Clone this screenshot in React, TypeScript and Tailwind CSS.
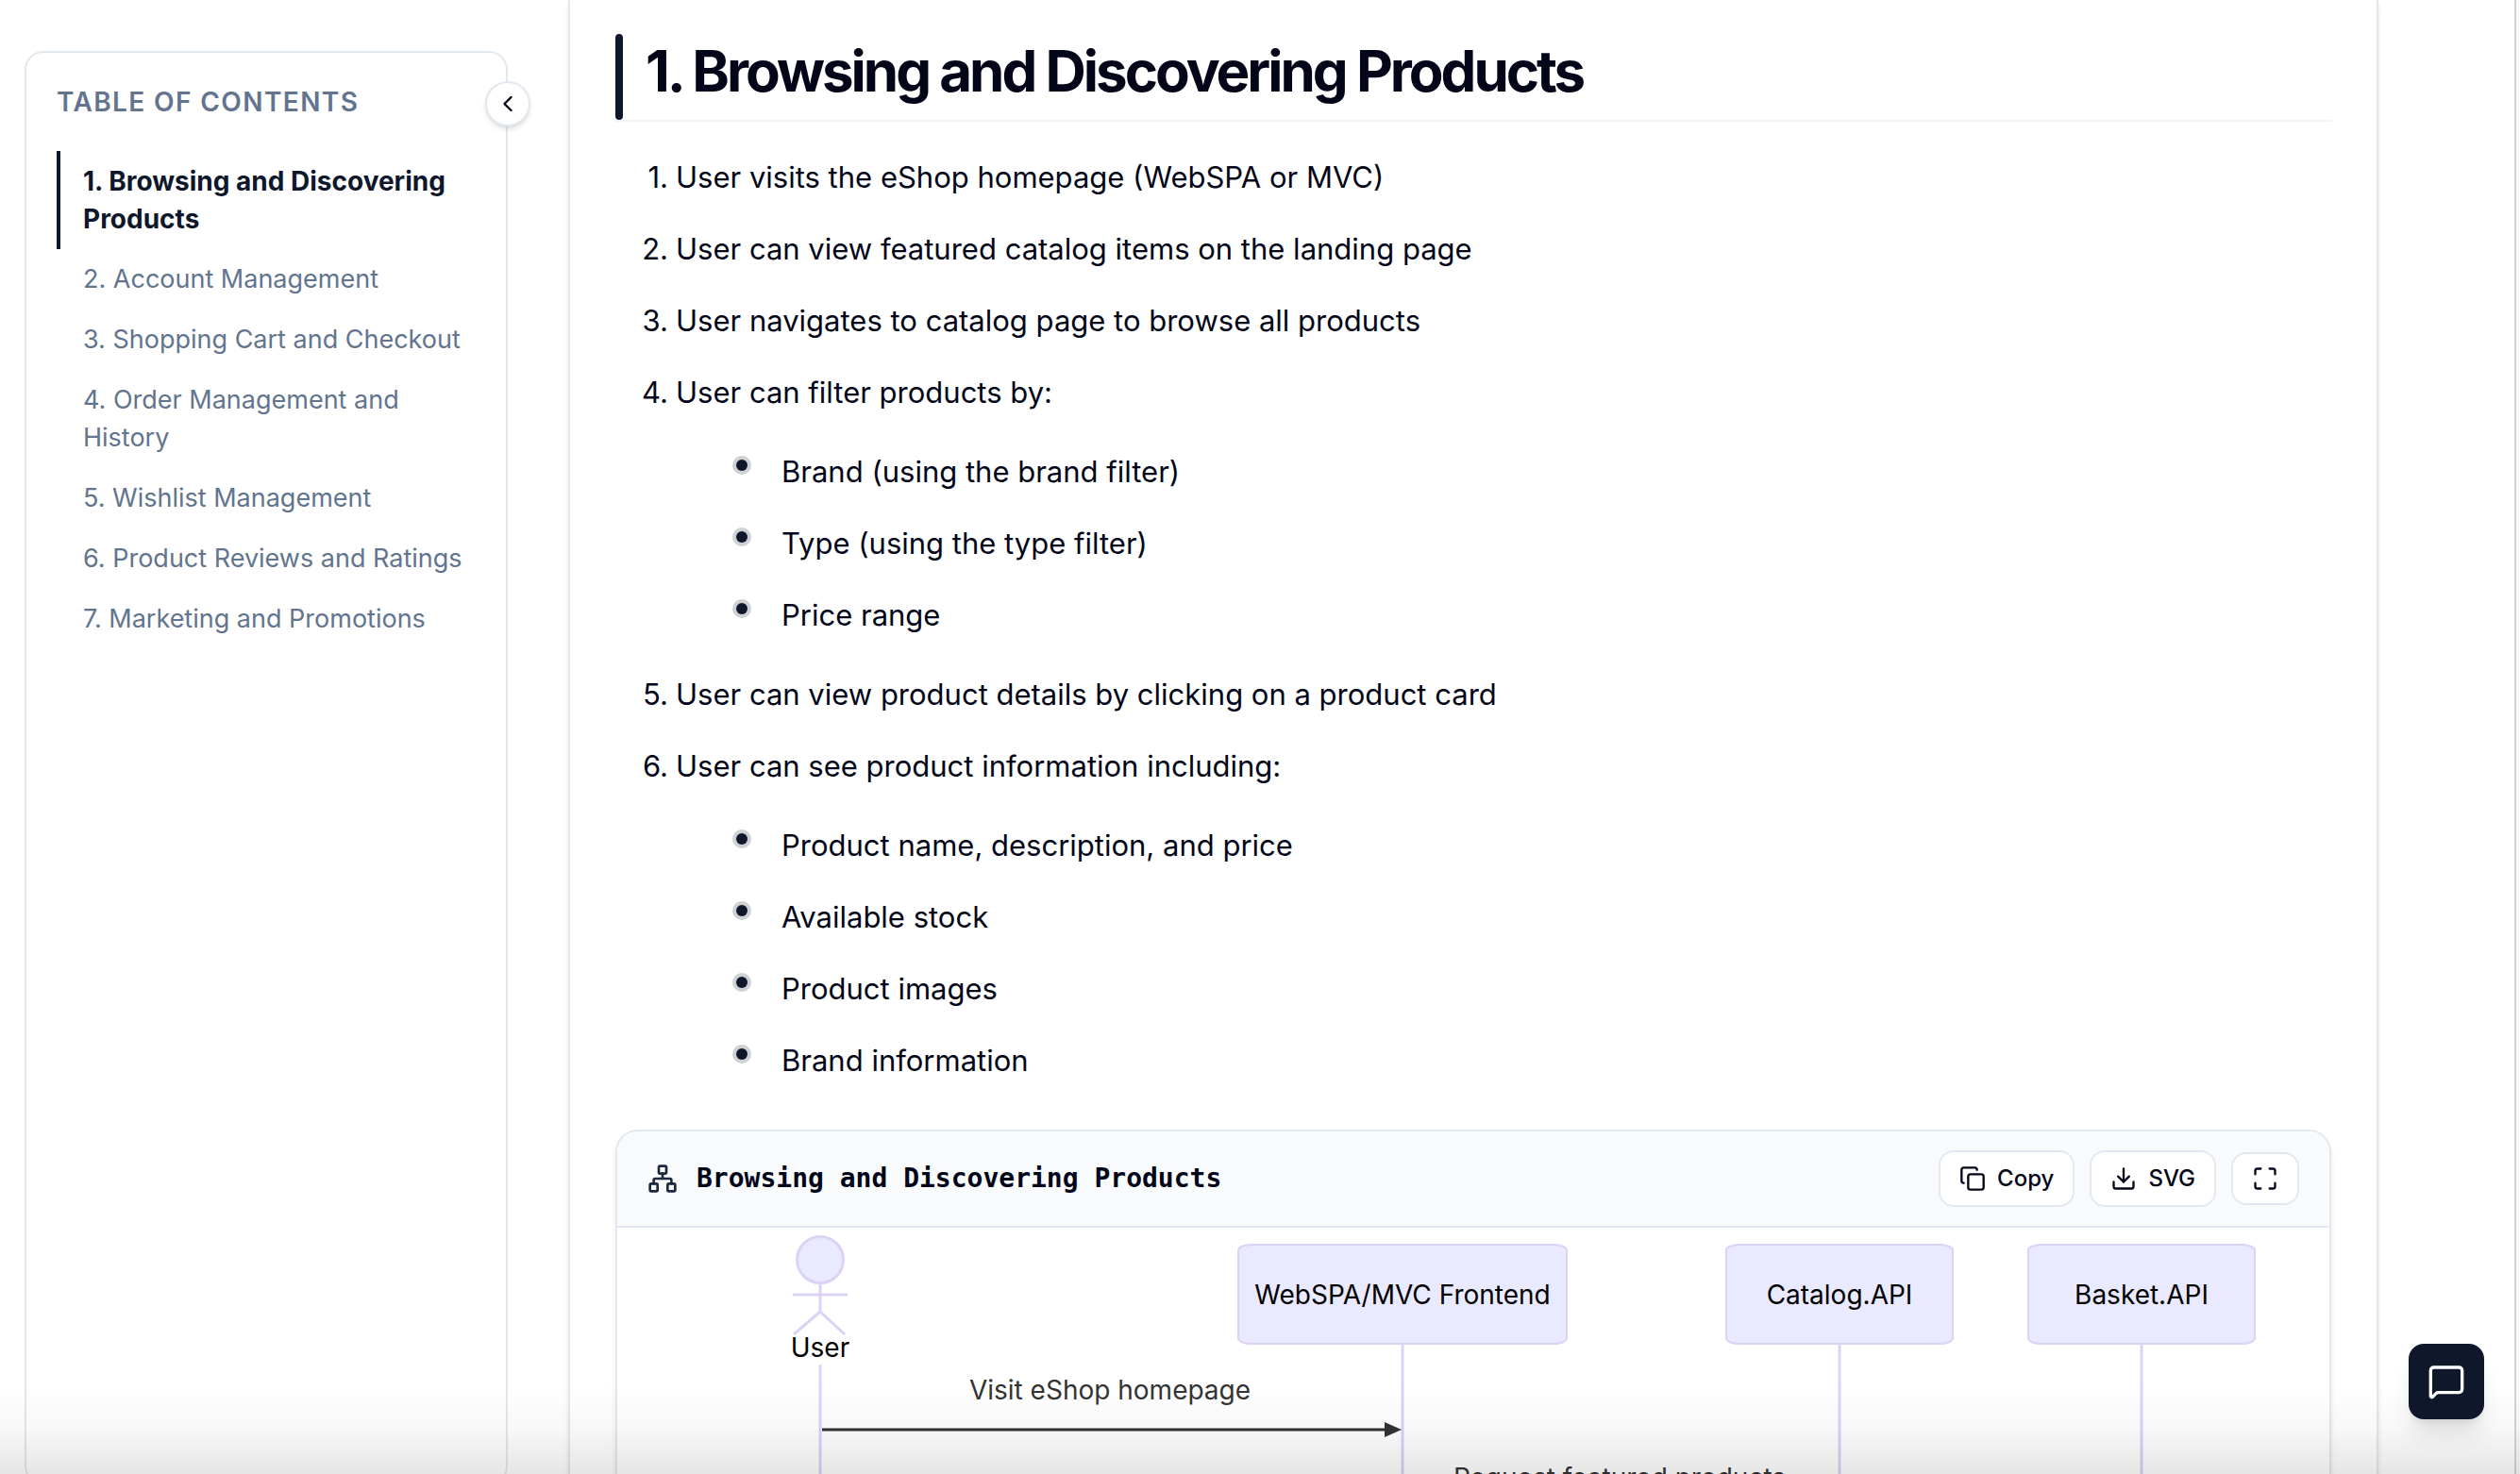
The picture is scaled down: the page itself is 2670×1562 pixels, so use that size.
import { ChevronLeft, Copy, Download, Maximize, MessageSquare, Network } from "lucide-react";
import clsx from "clsx";

const sections = [
    "1. Browsing and Discovering Products",
    "2. Account Management",
    "3. Shopping Cart and Checkout",
    "4. Order Management and History",
    "5. Wishlist Management",
    "6. Product Reviews and Ratings",
    "7. Marketing and Promotions",
];

type Step = { text: string; details?: string[] };

const steps: Step[] = [
    { text: "User visits the eShop homepage (WebSPA or MVC)" },
    { text: "User can view featured catalog items on the landing page" },
    { text: "User navigates to catalog page to browse all products" },
    {
        text: "User can filter products by:",
        details: ["Brand (using the brand filter)", "Type (using the type filter)", "Price range"],
    },
    { text: "User can view product details by clicking on a product card" },
    {
        text: "User can see product information including:",
        details: ["Product name, description, and price", "Available stock", "Product images", "Brand information"],
    },
];

const participants = [
    { label: "WebSPA/MVC Frontend", x: 658, width: 348 },
    { label: "Catalog.API", x: 1175, width: 240 },
    { label: "Basket.API", x: 1495, width: 240 },
];

function TableOfContents() {
    return (
        <aside className="relative mt-[54px] h-[calc(100vh-42px)] w-[512px] shrink-0 rounded-[20px] border-2 border-slate-200 px-8 pt-8">
            <h2 className="text-[28px] leading-10 font-semibold tracking-wider text-slate-500 uppercase">
                Table of Contents
            </h2>
            <nav className="mt-8 flex flex-col">
                {sections.map((section, i) => (
                    <a
                        key={section}
                        href={`#section-${i + 1}`}
                        className={clsx(
                            "border-l-4 py-3 pl-6 leading-10",
                            i === 0
                                ? "border-slate-900 text-[28px] font-bold text-slate-900"
                                : "border-transparent text-[27px] text-slate-500"
                        )}
                    >
                        {section}
                    </a>
                ))}
            </nav>
            <button
                type="button"
                aria-label="Collapse table of contents"
                className="absolute top-[30px] -right-[26px] flex size-12 items-center justify-center rounded-full border-2 border-slate-200 bg-white text-slate-950 shadow-md"
            >
                <ChevronLeft size={28} />
            </button>
        </aside>
    );
}

function StepList() {
    return (
        <ol className="mt-[31px] flex flex-col gap-5 pl-7 text-[31px] leading-[56px]">
            {steps.map((step, i) => (
                <li key={step.text}>
                    <div className="flex">
                        <span className="w-9 shrink-0 pr-2 text-right">{i + 1}.</span>
                        {step.text}
                    </div>
                    {step.details && (
                        <ul className="mt-7 mb-2 flex flex-col gap-5 pl-[100px]">
                            {step.details.map(detail => (
                                <li key={detail} className="flex gap-9">
                                    <span className="mt-[15px] size-3 shrink-0 rounded-full bg-slate-900 ring-4 ring-slate-900/20" />
                                    {detail}
                                </li>
                            ))}
                        </ul>
                    )}
                </li>
            ))}
        </ol>
    );
}

function SequenceDiagram() {
    return (
        <svg viewBox="0 0 1814 400" className="block w-full" fontFamily="Inter, sans-serif" fontSize="28" textAnchor="middle">
            {/* Actor */}
            <g fill="#e9e9ff" stroke="#dcd2f5" strokeWidth="3">
                <path d="M215 145V400" />
                <path d="M215 59V89L187 113M215 89L241 113M186 71H244" fill="none" />
                <circle cx="215" cy="34" r="24.5" />
            </g>
            <text x="215" y="137">User</text>

            {participants.map(({ label, x, width }) => (
                <g key={label}>
                    <path d={`M${x + width / 2} 122V400`} stroke="#dcd2f5" strokeWidth="3" />
                    <rect x={x} y="18" width={width} height="105" rx="14" ry="6" fill="#e9e9ff" stroke="#dcd2f5" strokeWidth="2" />
                    <text x={x + width / 2} y="81">{label}</text>
                </g>
            ))}

            {/* Messages */}
            <g fill="#333">
                <text x="522" y="182">Visit eShop homepage</text>
                <text x="1062" y="275">Request featured products</text>
                <path d="M217 214H814" stroke="#333" strokeWidth="3" />
                <path d="M813 206L831 214L813 222Z" />
            </g>
        </svg>
    );
}

function DiagramCard() {
    return (
        <section className="mt-[37px] overflow-hidden rounded-3xl border-2 border-slate-200 bg-white shadow-md">
            <header className="flex h-[102px] items-center gap-4 border-b-2 border-slate-200 bg-slate-50 px-8 text-slate-950">
                <Network size={32} className="mr-1 text-slate-800" />
                <h3 className="grow font-['DejaVu_Sans_Mono',monospace] text-[28px] font-bold">
                    Browsing and Discovering Products
                </h3>
                <button type="button" className="flex h-[60px] items-center gap-3 rounded-2xl border-2 border-slate-200 bg-white px-5 text-2xl font-medium">
                    <Copy size={28} />
                    Copy
                </button>
                <button type="button" className="flex h-[60px] items-center gap-3 rounded-2xl border-2 border-slate-200 bg-white px-5 text-2xl font-medium">
                    <Download size={28} />
                    SVG
                </button>
                <button type="button" aria-label="Full screen" className="flex h-14 w-[72px] items-center justify-center rounded-2xl border-2 border-slate-200 bg-white">
                    <Maximize size={28} />
                </button>
            </header>
            <SequenceDiagram />
        </section>
    );
}

export default function App() {
    return (
        <div className="relative flex h-screen gap-16 overflow-hidden bg-white pl-[26px] font-[Inter,sans-serif] text-slate-950">
            <TableOfContents />
            <main className="h-fit min-w-0 grow border-x-2 border-slate-200 px-12 pt-9 shadow-md">
                <div className="flex border-b-2 border-slate-100">
                    <span className="w-2 rounded-full bg-slate-900" />
                    <h1 className="px-6 pb-3 text-[60px] leading-[79px] font-bold tracking-tighter">
                        1. Browsing and Discovering Products
                    </h1>
                </div>
                <StepList />
                <DiagramCard />
            </main>
            <div className="ml-20 w-[6px] shrink-0 border-l-2 border-zinc-300 bg-slate-50" />

            {/* Fade at the bottom edge */}
            <div className="pointer-events-none absolute inset-x-0 bottom-0 h-24 bg-linear-to-t from-black/10 via-black/3 to-transparent" />
            <button
                type="button"
                aria-label="Open chat"
                className="absolute right-[38px] bottom-[58px] flex size-20 items-center justify-center rounded-2xl bg-slate-900 text-white shadow-xl"
            >
                <MessageSquare size={40} />
            </button>
        </div>
    );
}
